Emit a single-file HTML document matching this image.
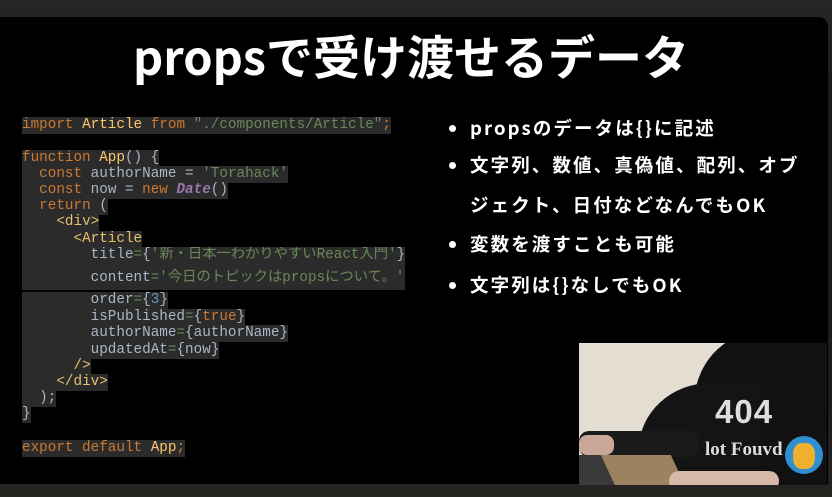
<!DOCTYPE html>
<html><head><meta charset="utf-8"><style>
*{margin:0;padding:0;box-sizing:border-box}
html,body{width:832px;height:497px;overflow:hidden}
body{background:linear-gradient(#262626,#1a1a1a 20%,#1c1c1c 80%,#262522);position:relative;font-family:"Liberation Sans","Noto Sans CJK JP",sans-serif}
.slide{position:absolute;left:0;top:17px;width:828px;height:467px;background:#000;border-radius:0 10px 0 0}
h1{position:absolute;left:0;width:822px;top:26px;text-align:center;color:#fff;font-size:47px;font-weight:bold;font-family:"Noto Sans CJK JP","Liberation Sans",sans-serif;line-height:58px;white-space:nowrap}
.l{position:absolute;left:22px;font-family:"Liberation Mono","Noto Sans CJK JP",monospace;font-size:14.3px;line-height:17px;height:17px;white-space:pre;color:#a9b7c6;background:#2b2b2b;overflow:hidden}
.k{color:#cc7832}.f{color:#ffc66d}.s{color:#6a8759}.p{color:#9876aa;font-style:italic;font-weight:bold}.n{color:#6897bb}.t{color:#e8bf6a}.e{color:#6a8759}
.b{position:absolute;left:470px;color:#fff;font-size:18.5px;font-weight:bold;letter-spacing:2.1px;font-family:"Noto Sans CJK JP","Liberation Sans",sans-serif;line-height:24px;white-space:nowrap}
.d{position:absolute;left:449px;width:7px;height:7px;border-radius:50%;background:#fff}
.cam{position:absolute;left:579px;top:343px;width:248px;height:142px;overflow:hidden;background:#e3ddd2}
</style></head><body>
<div class="slide"></div>
<h1>propsで受け渡せるデータ</h1>

<div class="l" style="top:117px"><span class="k">import </span><span class="f">Article </span><span class="k">from </span><span class="s">"./components/Article"</span><span class="k">;</span></div>
<div class="l" style="top:150px"><span class="k">function </span><span class="f">App</span>() {</div>
<div class="l" style="top:166px">  <span class="k">const </span>authorName = <span class="s">'Torahack'</span></div>
<div class="l" style="top:182px">  <span class="k">const </span>now = <span class="k">new </span><span class="p">Date</span>()</div>
<div class="l" style="top:198px">  <span class="k">return </span>(</div>
<div class="l" style="top:214px">    <span class="t">&lt;div&gt;</span></div>
<div class="l" style="top:231px">      <span class="t">&lt;Article</span></div>
<div class="l" style="top:247px;height:20px;width:383px">        title<span class="e">=</span>{<span class="s">'新・日本一わかりやすいReact入門'</span>}</div>
<div class="l" style="top:266px;height:24px;line-height:24px;width:383px">        content<span class="e">=</span><span class="s">'今日のトピックはpropsについて。'</span></div>
<div class="l" style="top:292px">        order<span class="e">=</span>{<span class="n">3</span>}</div>
<div class="l" style="top:309px">        isPublished<span class="e">=</span>{<span class="k">true</span>}</div>
<div class="l" style="top:325px">        authorName<span class="e">=</span>{authorName}</div>
<div class="l" style="top:342px">        updatedAt<span class="e">=</span>{now}</div>
<div class="l" style="top:358px">      <span class="t">/&gt;</span></div>
<div class="l" style="top:374px">    <span class="t">&lt;/div&gt;</span></div>
<div class="l" style="top:390px">  );</div>
<div class="l" style="top:406px">}</div>
<div class="l" style="top:440px"><span class="k">export default </span><span class="f">App</span><span class="k">;</span></div>

<div class="d" style="top:125px"></div><div class="b" style="top:116px">propsのデータは{}に記述</div>
<div class="d" style="top:162px"></div><div class="b" style="top:153px">文字列、数値、真偽値、配列、オブ</div>
<div class="b" style="top:193px">ジェクト、日付などなんでもOK</div>
<div class="d" style="top:241px"></div><div class="b" style="top:232px">変数を渡すことも可能</div>
<div class="d" style="top:282px"></div><div class="b" style="top:273px">文字列は{}なしでもOK</div>

<div class="cam">
<div style="position:absolute;left:115px;top:-10px;width:160px;height:180px;border-radius:40% 0 0 0;background:#111"></div>
<div style="position:absolute;left:60px;top:40px;width:120px;height:110px;border-radius:60% 0 0 0;background:#141414"></div>
<div style="position:absolute;left:0;top:88px;width:120px;height:26px;background:#1a1a1a;border-radius:10px"></div>
<div style="position:absolute;left:0;top:92px;width:35px;height:20px;background:#c9a898;border-radius:8px"></div>
<div style="position:absolute;left:0;top:112px;width:45px;height:30px;background:#3a3a3a"></div>
<div style="position:absolute;left:30px;top:112px;width:70px;height:35px;background:#9c8260;transform:skewX(25deg)"></div>
<div style="position:absolute;left:90px;top:128px;width:110px;height:20px;background:#d8b8a8;border-radius:12px"></div>
<div style="position:absolute;left:136px;top:50px;color:#ddd;font:bold 33px 'Liberation Sans',sans-serif;letter-spacing:1px">404</div>
<div style="position:absolute;left:126px;top:96px;color:#ddd;font:bold 19px 'Liberation Serif',serif">lot Fouvd</div>
<div style="position:absolute;left:206px;top:93px;width:38px;height:38px;border-radius:50%;background:#2f8fd0"></div>
<div style="position:absolute;left:214px;top:100px;width:22px;height:26px;border-radius:40%;background:#f0b030"></div>
</div>
</body></html>
